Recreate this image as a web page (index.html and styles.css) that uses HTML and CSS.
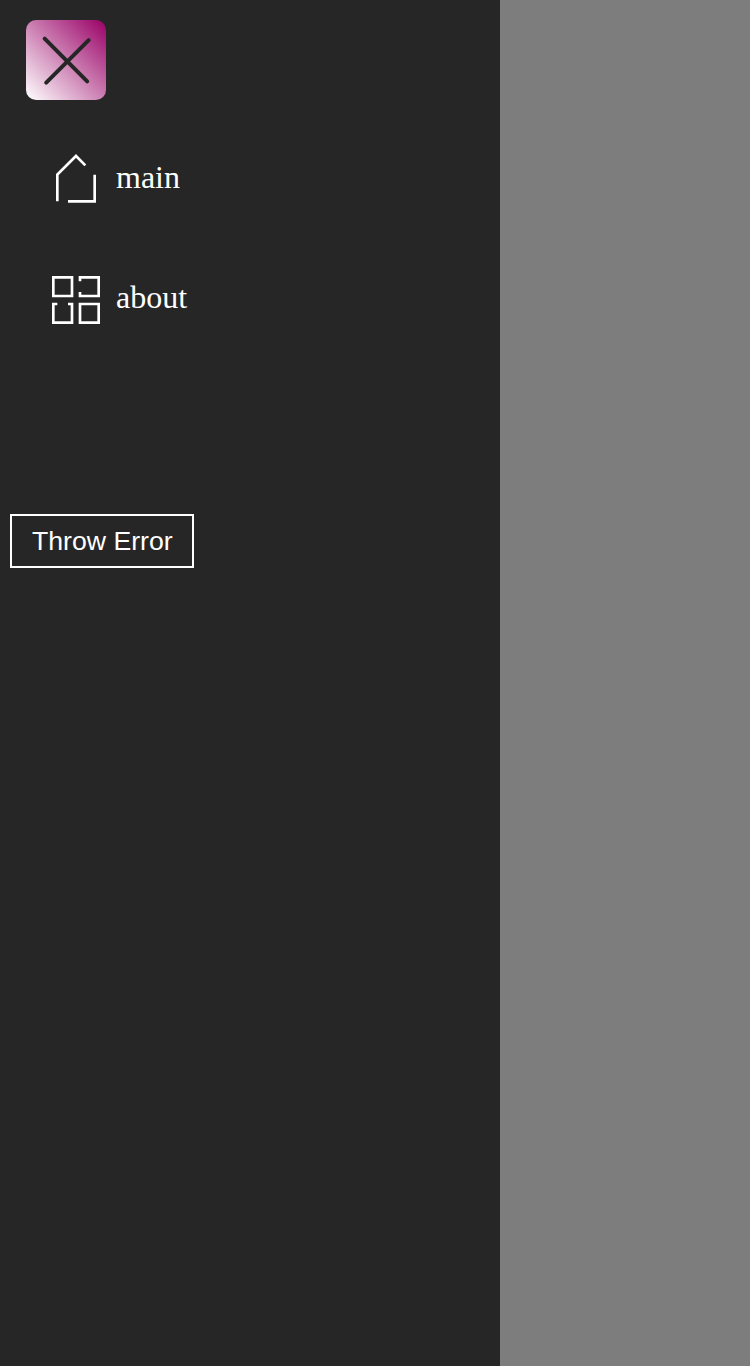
FILE: index.html
```html
<!DOCTYPE html>
<html lang="en">
<head>
<meta charset="utf-8">
<title>Menu</title>
<link rel="stylesheet" href="styles.css">
</head>
<body>
<div class="overlay">
  <aside class="sidebar">
    <button class="close" aria-label="Close menu">
      <svg width="80" height="80" viewBox="0 0 80 80"><path d="M18.7 18.7 61.2 61.3M62.7 20.2 20.2 62.6"/></svg>
    </button>
    <nav class="nav">
      <a class="link">
        <svg class="icon" viewBox="0 0 18 18"><path d="M2 17V7L9 0l3.5 3.5M16 7v10H6"/></svg>
        <span class="label">main</span>
      </a>
      <a class="link">
        <svg class="icon" viewBox="0 0 18 18"><path d="M.5.5h7v7h-7zM10.5 10.5h7v7h-7zM10.5 2V.5h7v7h-7V6M2 10.5H.5v7h7v-7H6"/></svg>
        <span class="label">about</span>
      </a>
    </nav>
    <button class="error">Throw Error</button>
  </aside>
</div>
</body>
</html>
```

FILE: styles.css
```css
body {
  margin: 0;
}

.overlay {
  display: flex;
  min-height: 1366px;
  background: #7d7d7d;
}

.sidebar {
  display: flex;
  flex-direction: column;
  align-items: flex-start;
  box-sizing: border-box;
  width: 500px;
  padding: 20px 0 0 10px;
  background: #262626;
  color: #fff;
}

.close {
  display: block;
  width: 80px;
  height: 80px;
  margin-left: 16px;
  padding: 0;
  border: 0;
  border-radius: 10px;
  background: linear-gradient(45deg, #fff, #990066);
}

.close svg {
  display: block;
  fill: none;
  stroke: #262626;
  stroke-width: 4;
  stroke-linecap: round;
}

.nav {
  display: flex;
  flex-direction: column;
  gap: 72px;
  margin: 56px 0 0 42px;
}

.link {
  display: flex;
  gap: 16px;
  height: 48px;
}

.icon {
  width: 48px;
  height: 48px;
  overflow: visible;
  fill: none;
  stroke: #fff;
  stroke-width: 1;
}

.label {
  font: 32px/42px "Liberation Serif", serif;
}

.error {
  box-sizing: border-box;
  width: 184px;
  height: 54px;
  margin-top: 190px;
  padding: 0 0 0 20px;
  border: 2px solid #fff;
  background: transparent;
  color: #fff;
  font: 26.667px "Liberation Sans", sans-serif;
  text-align: left;
}
```
